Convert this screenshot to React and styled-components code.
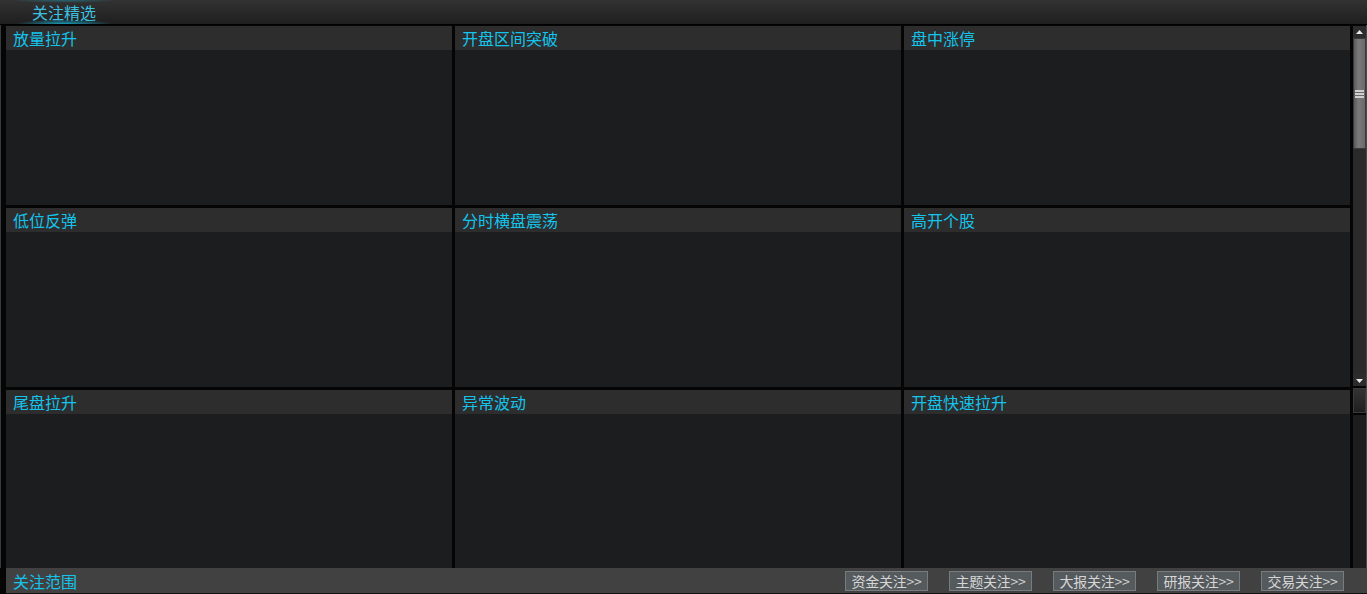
import styled, { createGlobalStyle } from "styled-components";

const GlobalStyle = createGlobalStyle`
  html, body {
    margin: 0;
    padding: 0;
    background: #050505;
    overflow: hidden;
  }
  body {
    font-family: "Noto Sans CJK SC", "DejaVu Sans", sans-serif;
  }
`;

const Frame = styled.div`
  width: 1367px;
  height: 594px;
  display: flex;
  flex-direction: column;
  background: #050505;
  overflow: hidden;
`;

const TopBar = styled.div`
  height: 24px;
  flex: none;
  display: flex;
  align-items: stretch;
  padding-left: 16px;
  background: linear-gradient(#323232, #1f1f1f);
  border-bottom: 1px solid #000;
`;

const Tab = styled.div`
  width: 96px;
  display: flex;
  align-items: center;
  justify-content: center;
  padding-bottom: 1px;
  font-size: 16px;
  color: #3cc0e0;
  background:
    radial-gradient(
      ellipse 50% 18% at 50% 100%,
      rgba(20, 200, 240, 0.75),
      rgba(20, 200, 240, 0) 100%
    ),
    radial-gradient(
      ellipse 55% 12% at 50% 0%,
      rgba(20, 200, 240, 0.35),
      rgba(20, 200, 240, 0) 100%
    );
`;

const Middle = styled.div`
  flex: 1;
  display: flex;
  min-height: 0;
`;

const LeftEdge = styled.div`
  width: 6px;
  flex: none;
  box-sizing: border-box;
  border-left: 1px solid #363b40;
  background: #050505;
`;

const Grid = styled.div`
  width: 1344px;
  flex: none;
  display: grid;
  grid-template-columns: repeat(3, 446px);
  grid-template-rows: repeat(3, 179px);
  gap: 3px;
  padding-top: 1px;
  overflow: hidden;
`;

const Panel = styled.div`
  display: flex;
  flex-direction: column;
  background: #1c1d1f;
`;

const PanelHead = styled.div`
  height: 24px;
  flex: none;
  display: flex;
  align-items: center;
  padding-left: 7px;
  background: #2d2d2d;
  color: #14c4ec;
  font-size: 16px;
`;

const ScrollCol = styled.div`
  width: 13px;
  flex: none;
  margin-left: 3px;
  padding-top: 1px;
  display: flex;
  flex-direction: column;
  gap: 2px;
`;

const ScrollTrack = styled.div`
  height: 360px;
  flex: none;
  display: flex;
  flex-direction: column;
  background: #2a2a2a;
`;

const Arrow = styled.div`
  height: 12px;
  flex: none;
  display: flex;
  align-items: center;
  justify-content: center;
  background: #2c2c2c;
`;

const Thumb = styled.div`
  height: 111px;
  flex: none;
  display: flex;
  align-items: center;
  justify-content: center;
  box-sizing: border-box;
  border: 1px solid #3a3a3a;
  background: linear-gradient(90deg, #5a5a5a, #7a7a7a 40%, #6a6a6a);
`;

const Grip = styled.div`
  width: 9px;
  height: 8px;
  background: repeating-linear-gradient(
    #cfcfcf 0,
    #cfcfcf 2px,
    #6a6a6a 2px,
    #6a6a6a 3px
  );
`;

const Rail = styled.div`
  flex: 1;
`;

const ScrollBox = styled.div`
  height: 25px;
  flex: none;
  box-sizing: border-box;
  border: 1px solid #3a3a3a;
  background: linear-gradient(#333, #1f1f1f);
`;

const ScrollRest = styled.div`
  flex: 1;
  background: #1d1d1d;
`;

const RightEdge = styled.div`
  width: 1px;
  flex: none;
  background: #3f4a55;
`;

const BottomBar = styled.div`
  height: 26px;
  flex: none;
  display: flex;
  align-items: center;
  margin-left: 6px;
  padding: 0 23px 0 7px;
  background: #414141;
  border-bottom: 1px solid #111;
  box-sizing: border-box;
`;

const RangeLabel = styled.div`
  flex: 1;
  color: #14c4ec;
  font-size: 16px;
`;

const Links = styled.div`
  display: flex;
  gap: 21px;
`;

const LinkButton = styled.div`
  width: 83px;
  height: 20px;
  box-sizing: border-box;
  display: flex;
  align-items: center;
  justify-content: center;
  border: 1px solid #777c80;
  background: #555a5d;
  color: #d6d6d6;
  font-size: 14px;
  letter-spacing: -0.3px;
`;

const panels = [
  "放量拉升",
  "开盘区间突破",
  "盘中涨停",
  "低位反弹",
  "分时横盘震荡",
  "高开个股",
  "尾盘拉升",
  "异常波动",
  "开盘快速拉升",
];

const links = ["资金关注", "主题关注", "大报关注", "研报关注", "交易关注"];

const UpArrow = () => (
  <svg width="7" height="5" viewBox="0 0 7 5">
    <path d="M3.5 0 L7 4 L0 4 Z" fill="#e8e8e8" />
  </svg>
);

const DownArrow = () => (
  <svg width="7" height="5" viewBox="0 0 7 5">
    <path d="M0 1 L7 1 L3.5 5 Z" fill="#e8e8e8" />
  </svg>
);

const App = () => {
  return (
    <>
      <GlobalStyle />
      <Frame>
        <TopBar>
          <Tab>关注精选</Tab>
        </TopBar>
        <Middle>
          <LeftEdge />
          <Grid>
            {panels.map((title) => (
              <Panel key={title}>
                <PanelHead>{title}</PanelHead>
              </Panel>
            ))}
          </Grid>
          <ScrollCol>
            <ScrollTrack>
              <Arrow>
                <UpArrow />
              </Arrow>
              <Thumb>
                <Grip />
              </Thumb>
              <Rail />
              <Arrow>
                <DownArrow />
              </Arrow>
            </ScrollTrack>
            <ScrollBox />
            <ScrollRest />
          </ScrollCol>
          <RightEdge />
        </Middle>
        <BottomBar>
          <RangeLabel>关注范围</RangeLabel>
          <Links>
            {links.map((l) => (
              <LinkButton key={l}>{l}&gt;&gt;</LinkButton>
            ))}
          </Links>
        </BottomBar>
      </Frame>
    </>
  );
};

export default App;
